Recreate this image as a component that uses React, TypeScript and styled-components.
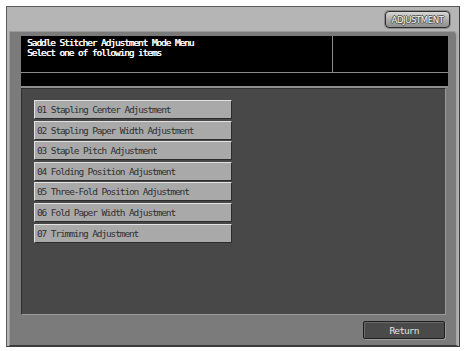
import React from "react";
import styled, { createGlobalStyle } from "styled-components";

const Global = createGlobalStyle`
  html, body { margin: 0; padding: 0; background: #ffffff; }
  body { width: 465px; height: 351px; overflow: hidden; }
`;

const pixelFont = `"DejaVu Sans Mono", "Liberation Mono", monospace`;

const Frame = styled.div`
  box-sizing: border-box;
  margin: 6px 0 0 6px;
  width: 454px;
  height: 341px;
  background: #b5b5b5;
  border-top: 1px solid #5a5a5a;
  border-left: 1px solid #5a5a5a;
  border-right: 1px solid #3c3c3c;
  border-bottom: 1px solid #3c3c3c;
  display: flex;
  flex-direction: column;
`;

const TopBar = styled.div`
  height: 24px;
  display: flex;
  justify-content: flex-end;
  align-items: flex-start;
  padding: 4px 9px 0 0;
  box-sizing: border-box;
`;

const ModeButton = styled.div`
  box-sizing: border-box;
  width: 65px;
  height: 17px;
  border-radius: 4px;
  border: 1px solid #2e2e2e;
  box-shadow: 0 0 0 1px #8a8a8a;
  background: linear-gradient(#d8d8d8, #a8a8a8 55%, #8e8e8e);
  display: flex;
  align-items: center;
  justify-content: center;
  font-family: "DejaVu Sans", "Liberation Sans", sans-serif;
  font-size: 8.5px;
  letter-spacing: -0.4px;
  color: #f4f4f4;
  text-shadow: 1px 0 0 #555, -1px 0 0 #555, 0 1px 0 #555, 0 -1px 0 #555;
`;

const Panel = styled.div`
  flex: 1;
  margin: 0 1px 0 2px;
  box-sizing: border-box;
  background: #7b7b7b;
  border-top: 1px solid #9c9c9c;
  border-left: 1px solid #9c9c9c;
  border-right: 2px solid #a8a8a8;
  border-bottom: 1px solid #3a3a3a;
  border-top-right-radius: 5px;
  padding: 4px 8px 4px 11px;
  display: flex;
  flex-direction: column;
`;

const Header = styled.div`
  background: #000;
  display: flex;
  flex-direction: column;
  border-bottom: 2px solid #8e8e8e;
`;

const HeaderTop = styled.div`
  height: 36px;
  display: grid;
  grid-template-columns: 312px 1fr;
  border-bottom: 1px solid #8a8a8a;
`;

const MessageCell = styled.div`
  padding: 2px 0 0 6px;
  border-right: 1px solid #8a8a8a;
  font-family: ${pixelFont};
  font-size: 9.5px;
  line-height: 9.5px;
  letter-spacing: -1.1px;
  color: #ffffff;
  text-shadow: 0.4px 0 0 #ffffff;
  white-space: pre;
`;

const SideCell = styled.div``;

const HeaderStrip = styled.div`
  height: 13px;
`;

const Content = styled.div`
  box-sizing: border-box;
  height: 227px;
  margin-right: 2px;
  background: #484848;
  border-top: 1px solid #2e2e2e;
  border-left: 1px solid #2e2e2e;
  border-right: 1px solid #9a9a9a;
  border-bottom: 1px solid #9a9a9a;
  padding: 11px 0 0 12px;
  display: flex;
  flex-direction: column;
  gap: 1.6px;
`;

const Item = styled.div`
  box-sizing: border-box;
  width: 198px;
  height: 19px;
  background: #a9a9a9;
  border-top: 1px solid #e2e2e2;
  border-left: 1px solid #e2e2e2;
  border-right: 1px solid #2c2c2c;
  border-bottom: 1px solid #2c2c2c;
  padding-left: 2px;
  display: flex;
  align-items: center;
  font-family: ${pixelFont};
  font-size: 9.5px;
  letter-spacing: -1.12px;
  color: #303030;
  white-space: pre;
`;

const Footer = styled.div`
  display: flex;
  justify-content: flex-end;
  padding: 6px 0 0 0;
  margin-right: 3px;
`;

const ReturnButton = styled.div`
  box-sizing: border-box;
  width: 82px;
  height: 18px;
  background: #4a4a4a;
  border: 1px solid #1e1e1e;
  box-shadow: inset 1px 1px 0 #6a6a6a, 1px 1px 0 #9a9a9a;
  border-radius: 2px;
  display: flex;
  align-items: center;
  justify-content: center;
  font-family: ${pixelFont};
  font-size: 9.5px;
  letter-spacing: -0.9px;
  color: #e0e0e0;
`;

const items = [
  "01 Stapling Center Adjustment",
  "02 Stapling Paper Width Adjustment",
  "03 Staple Pitch Adjustment",
  "04 Folding Position Adjustment",
  "05 Three-Fold Position Adjustment",
  "06 Fold Paper Width Adjustment",
  "07 Trimming Adjustment",
];

export default function App() {
  return (
    <>
      <Global />
      <Frame>
        <TopBar>
          <ModeButton>ADJUSTMENT</ModeButton>
        </TopBar>
        <Panel>
          <Header>
            <HeaderTop>
              <MessageCell>
                {"Saddle Stitcher Adjustment Mode Menu\nSelect one of following items"}
              </MessageCell>
              <SideCell />
            </HeaderTop>
            <HeaderStrip />
          </Header>
          <Content>
            {items.map((t) => (
              <Item key={t}>{t}</Item>
            ))}
          </Content>
          <Footer>
            <ReturnButton>Return</ReturnButton>
          </Footer>
        </Panel>
      </Frame>
    </>
  );
}
